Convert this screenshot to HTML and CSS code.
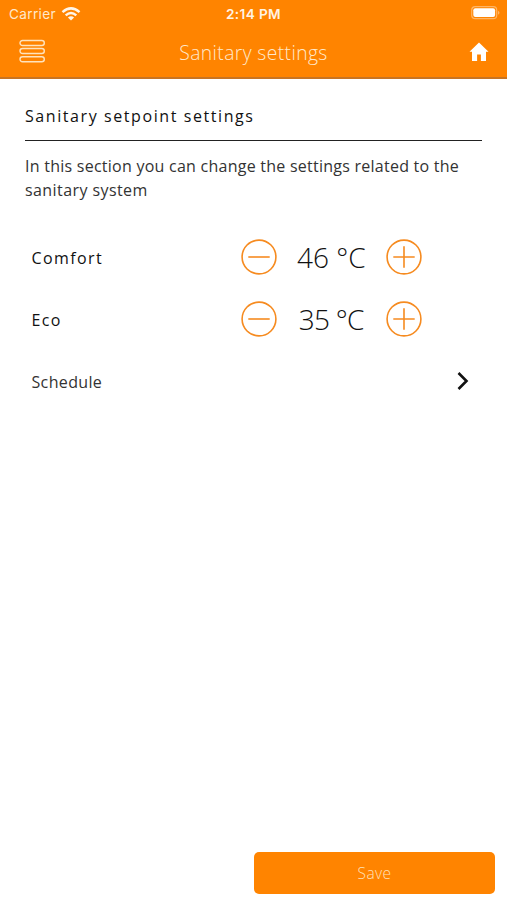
FILE: index.html
```html
<!DOCTYPE html>
<html lang="en">
<head>
<meta charset="utf-8">
<title>Sanitary settings</title>
<link rel="stylesheet" href="styles.css">
</head>
<body>
<div class="app">
  <header class="header">
    <div class="status">
      <div class="carrier"><span>Carrier</span>
        <svg width="20" height="14" viewBox="0 0 20 14" fill="none" stroke="#fff5e8" stroke-width="2.5"><path d="M1.500 5.100Q10-2.300 18.500 5.100M4.700 8.400Q10 3.700 15.300 8.400"/><path d="M10 13.600L6.900 10.500Q10 8 13.100 10.500Z" fill="#fff5e8" stroke="none"/></svg>
      </div>
      <span class="time">2:14 PM</span>
      <svg class="battery" width="30" height="14" viewBox="0 0 30 14"><rect x=".7" y=".7" width="25" height="12" rx="3.500" fill="none" stroke="#ffb565" stroke-width="1.200"/><rect x="2.300" y="2.300" width="21.800" height="8.800" rx="2" fill="#fff"/><path d="M27 4.700Q30 6.700 27 8.700Z" fill="#ffb565"/></svg>
    </div>
    <div class="nav">
      <svg class="menu" width="27" height="25" viewBox="0 0 27 25" fill="none" stroke="#ffe3bd" stroke-width="1.400"><rect x="1" y="1.500" width="24.300" height="5" rx="2.500"/><rect x="1" y="9.500" width="24.300" height="5" rx="2.500"/><rect x="1" y="17.700" width="24.300" height="5" rx="2.500"/></svg>
      <h1 class="title">Sanitary settings</h1>
      <svg width="20" height="20" viewBox="0 0 20 20" fill="#fff"><path d="M10 .5L19.500 9.700H17V19H11.900V12.500H8.100V19H3V9.700H.5Z"/></svg>
    </div>
  </header>
  <main class="content">
    <h2 class="section-title">Sanitary setpoint settings</h2>
    <p class="intro">In this section you can change the settings related to the<br><span class="line-two">sanitary system</span></p>
    <div class="row">
      <span class="label">Comfort</span>
      <div class="stepper">
        <svg class="round" viewBox="0 0 36 36"><circle cx="18" cy="18" r="16.900"/><path d="M7.300 18H28.700"/></svg>
        <span class="value">46 °C</span>
        <svg class="round" viewBox="0 0 36 36"><circle cx="18" cy="18" r="16.900"/><path d="M7.300 18H28.700M18 7.300V28.700"/></svg>
      </div>
    </div>
    <div class="row">
      <span class="label">Eco</span>
      <div class="stepper">
        <svg class="round" viewBox="0 0 36 36"><circle cx="18" cy="18" r="16.900"/><path d="M7.300 18H28.700"/></svg>
        <span class="value narrow">35 °C</span>
        <svg class="round" viewBox="0 0 36 36"><circle cx="18" cy="18" r="16.900"/><path d="M7.300 18H28.700M18 7.300V28.700"/></svg>
      </div>
    </div>
    <div class="row link">
      <span class="schedule">Schedule</span>
      <svg width="12" height="20" viewBox="0 0 12 20" fill="none" stroke="#111" stroke-width="2.600"><path d="M1.500 2L9.500 10L1.500 18"/></svg>
    </div>
  </main>
  <footer class="footer"><button class="save">Save</button></footer>
</div>
</body>
</html>
```

FILE: styles.css
```css
* { box-sizing: border-box; }
body { margin: 0; background: #fff; font-family: "Open Sans", "Noto Sans", sans-serif; color: #222; }
.app { height: 900px; display: flex; flex-direction: column; }
.header { height: 79px; background: #ff8400; border-bottom: 2px solid #c87422; color: #ffe8cb; flex: none; }
.status { height: 27px; display: grid; grid-template-columns: 1fr auto 1fr; align-items: center; padding: 0 6px 0 9px; font-family: Inter, sans-serif; font-size: 13.6px; letter-spacing: .35px; }
.carrier { display: flex; align-items: center; gap: 5px; }
.time { font-weight: 600; color: #fff3e3; font-size: 13.6px; letter-spacing: .4px; margin-right: 3px; }
.battery { justify-self: end; margin-bottom: 1px; }
.nav { height: 50px; display: grid; grid-template-columns: 1fr auto 1fr; align-items: center; padding: 0 18px; }
.menu { margin: 0 0 2px .7px; }
.nav svg:last-child { justify-self: end; }
.title { margin: 2px 0 0; font-size: 19.3px; line-height: 28px; font-weight: 300; letter-spacing: .4px; }
.content { padding: 21px 25px 0; flex: 1; }
.section-title { margin: 0; height: 41px; border-bottom: 1px solid #222; font-size: 16px; line-height: 32px; font-weight: 400; letter-spacing: 1.58px; color: #111; }
.intro { margin: 13px 0 24px; font-size: 16px; line-height: 24px; letter-spacing: .25px; color: #333; white-space: nowrap; }
.line-two { letter-spacing: .42px; }
.row { height: 62px; display: flex; align-items: center; justify-content: space-between; padding: 0 60px 0 6.5px; }
.label { font-size: 16px; letter-spacing: 1.4px; color: #111; margin-top: 1px; }
.stepper { width: 181.5px; display: flex; align-items: center; justify-content: space-between; }
.round { width: 36px; height: 36px; fill: none; stroke: #f68b20; stroke-width: 1.6; }
.value { font-size: 28px; line-height: 36px; font-weight: 300; color: #111; white-space: nowrap; }
.narrow { letter-spacing: -.7px; }
.link { padding-right: 13px; }
.schedule { font-size: 16px; letter-spacing: .35px; color: #333; margin-top: 1px; }
.footer { height: 48px; padding-right: 12px; display: flex; justify-content: flex-end; flex: none; }
.save { width: 241px; height: 42px; border: 0; border-radius: 5px; background: #ff8400; color: #ffe0b8; font: 300 15.5px "Open Sans", sans-serif; letter-spacing: .4px; }
```
